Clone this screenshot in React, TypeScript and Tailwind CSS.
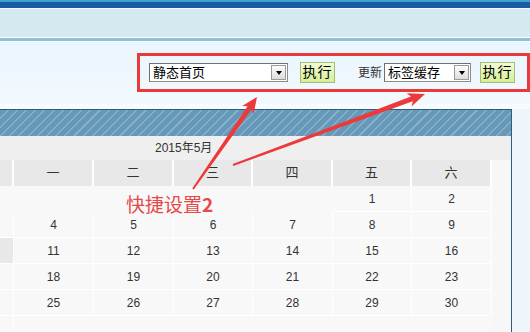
import React from 'react';

const weekdays = ['日', '一', '二', '三', '四', '五', '六'];

const weeks: (number | null)[][] = [
  [null, null, null, null, null, 1, 2],
  [3, 4, 5, 6, 7, 8, 9],
  [10, 11, 12, 13, 14, 15, 16],
  [17, 18, 19, 20, 21, 22, 23],
  [24, 25, 26, 27, 28, 29, 30],
  [31, null, null, null, null, null, null],
];

const FakeSelect = ({ label, width }: { label: string; width: string }) => (
  <div className={`${width} h-[19px] flex items-center bg-white border border-[#8c8c8c] border-t-[#6f6f6f] border-l-[#6f6f6f]`}>
    <span className="flex-1 pl-[3px] text-[13px] leading-none text-black">{label}</span>
    <div className="w-[15px] h-[15px] mr-px flex items-center justify-center border border-[#9a9a9a] bg-[linear-gradient(#fdfdfd,#dcdcdc)]">
      <div className="w-0 h-0 border-l-[3px] border-r-[3px] border-t-[4px] border-l-transparent border-r-transparent border-t-black" />
    </div>
  </div>
);

const RunButton = ({ className = '' }: { className?: string }) => (
  <div className={`w-[35px] h-[21px] flex items-center justify-center border border-[#a3bd7c] bg-[linear-gradient(#f2fbd3,#d6ef95)] text-[14px] tracking-[1px] text-black ${className}`}>
    执行
  </div>
);

export default function App() {
  return (
    <div className="relative w-[530px] h-[332px] overflow-hidden bg-[#f1f8fd] font-['Liberation_Sans','Noto_Sans_CJK_SC',sans-serif]">
      {/* top bands */}
      <div className="h-[2px] bg-[#3ea3c9]" />
      <div className="h-[6px] bg-[#1c5aa6]" />
      <div className="h-px bg-[#f2f8fb]" />
      <div className="h-[28px] bg-[#d5e9f1]" />
      <div className="h-px bg-white" />
      <div className="h-[3px] bg-[#8fc0d4]" />
      <div className="h-px bg-white" />

      {/* toolbar */}
      <div className="h-[62px] pt-[11px] bg-[linear-gradient(#eaf5fd,#f2f9fe)]">
        <div className="ml-[137px] h-[39px] border-[3px] border-[#e8393b] flex items-center pl-[9px]">
          <FakeSelect label="静态首页" width="w-[139px]" />
          <RunButton className="ml-[12px]" />
          <span className="ml-[23px] text-[12px] text-[#333]">更新</span>
          <div className="ml-[2px]">
            <FakeSelect label="标签缓存" width="w-[87px]" />
          </div>
          <RunButton className="ml-[9px]" />
        </div>
      </div>
      <div className="h-[5px] bg-[#f8fbfe]" />

      {/* calendar panel */}
      <div className="flex">
        <div className="w-[512px] h-[230px] overflow-hidden border-t border-r border-[#2a5d80] bg-[#f7f7f7]">
          <div className="h-[26px] bg-[repeating-linear-gradient(135deg,#6698b9_0px,#6698b9_5px,#86afca_5px,#86afca_6.5px)]" />
          <div className="h-[24px] bg-[#efefef] flex items-center pl-[155px] text-[12px] text-[#333]">
            2015年5月
          </div>
          <div className="ml-[-66px] w-[558px] grid grid-cols-[80px_80px_80px_79px_80px_79px_80px]">
            {weekdays.map((d) => (
              <div key={d} className="h-[26px] flex items-center justify-center bg-[#e8e8e8] border-r-2 border-white text-[13px] text-[#333]">
                {d}
              </div>
            ))}
            {weeks.flat().map((n, i) => (
              <div
                key={i}
                className={`h-[26px] flex items-center justify-center border-r border-b text-[12px] text-[#333] ${
                  n === null ? 'border-transparent' : 'border-white'
                } ${n === 10 ? 'bg-[#e8e8e8]' : 'bg-[#f8f8f8]'}`}
              >
                {n}
              </div>
            ))}
          </div>
        </div>
        <div className="flex-1 bg-[#eef6fc]" />
      </div>

      {/* annotation arrows */}
      <svg className="absolute left-0 top-0 pointer-events-none" width="530" height="332">
        <polygon
          fill="#ec3a3b"
          points="192.2,188.4 247.5,106.2 242.2,106.1 257,97 253.6,114.1 251.7,109 193.8,189.6"
        />
        <polygon
          fill="#ec3a3b"
          points="232.7,164.1 411,96.6 406.7,93.3 425,94 411.5,106.5 412.8,101.2 233.3,165.9"
        />
      </svg>
      <div className="absolute left-[126px] top-[193px] text-[19px] leading-[22px] text-[#e6484a] font-['Noto_Sans_CJK_SC',sans-serif]">
        快捷设置<span className="font-bold">2</span>
      </div>
    </div>
  );
}
